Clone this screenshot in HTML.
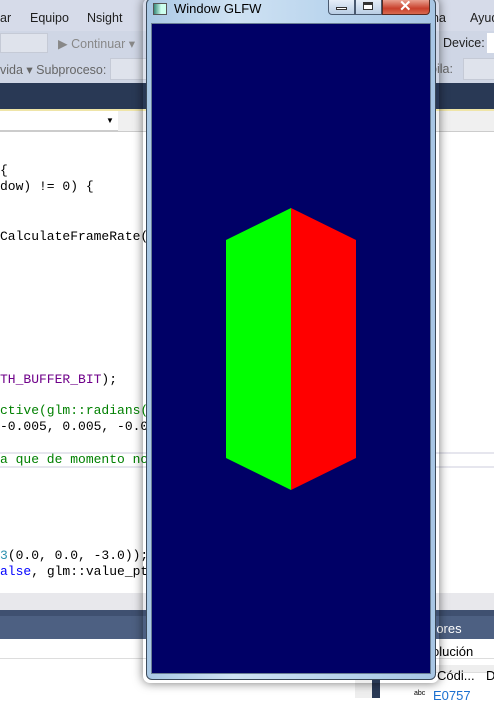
<!DOCTYPE html>
<html><head><style>
*{margin:0;padding:0;box-sizing:border-box}
body{width:494px;height:698px;overflow:hidden;position:relative;background:#fff;font-family:"Liberation Sans",sans-serif}
.a{position:absolute}
.code{font-family:"Liberation Mono",monospace;font-size:13px;white-space:pre;color:#000;left:0}
.menu{font-size:12.5px;color:#1e1e1e}
</style></head><body>
<div class="a" style="left:0;top:0;width:494px;height:31px;background:#d6dbe9"></div>
<div class="a menu" style="left:0;top:11px">ar</div>
<div class="a menu" style="left:30px;top:11px">Equipo</div>
<div class="a menu" style="left:87px;top:11px">Nsight</div>
<div class="a menu" style="left:432px;top:11px">na</div>
<div class="a menu" style="left:470px;top:11px">Ayud</div>
<div class="a" style="left:0;top:31px;width:494px;height:25px;background:#cfd6e5"></div>
<div class="a" style="left:0;top:33px;width:48px;height:20px;background:#dfe3ec;border:1px solid #c5cad6"></div>
<div class="a menu" style="left:58px;top:36px;color:#888">▶ Continuar ▾</div>
<div class="a menu" style="left:443px;top:36px">Device:</div>
<div class="a" style="left:487px;top:33px;width:10px;height:20px;background:#fff"></div>
<div class="a" style="left:0;top:56px;width:494px;height:27px;background:#cfd6e5"></div>
<div class="a menu" style="left:0;top:62px;color:#666">vida ▾ Subproceso:</div>
<div class="a" style="left:110px;top:58px;width:40px;height:22px;background:#dfe3ec;border:1px solid #c5cad6"></div>
<div class="a menu" style="left:430px;top:62px;color:#666">pila:</div>
<div class="a" style="left:463px;top:58px;width:40px;height:22px;background:#dfe3ec;border:1px solid #c5cad6"></div>
<div class="a" style="left:0;top:83px;width:494px;height:26px;background:#293955"></div>
<div class="a" style="left:0;top:109px;width:494px;height:2px;background:#efe5a8"></div>
<div class="a" style="left:0;top:111px;width:118px;height:20px;background:#fff;border-bottom:1px solid #ccc"></div>
<div class="a" style="left:106px;top:116px;font-size:8px">▼</div>
<div class="a" style="left:118px;top:111px;width:376px;height:20px;background:#f0f0f0"></div>
<div class="a" style="left:0;top:131px;width:494px;height:1px;background:#ccc"></div>
<div class="a code" style="top:163px">{</div>
<div class="a code" style="top:179px">dow) != 0) {</div>
<div class="a code" style="top:229px">CalculateFrameRate(<span style="color:#00f">fa</span></div>
<div class="a code" style="top:372px"><span style="color:#6f008a">TH_BUFFER_BIT</span>);</div>
<div class="a code" style="top:403px;color:#008000">ctive(glm::radians(45                       ight, 0.</div>
<div class="a code" style="top:419px">-0.005, 0.005, -0.005</div>
<div class="a" style="left:0;top:452px;width:494px;height:16px;border-top:2px solid #e6e6ee;border-bottom:2px solid #e6e6ee"></div>
<div class="a code" style="top:452px;color:#008000">a que de momento no s</div>
<div class="a code" style="top:548px"><span style="color:#2b91af">3</span>(0.0, 0.0, -3.0));</div>
<div class="a code" style="top:564px"><span style="color:#00f">alse</span>, glm::value_ptr(</div>
<div class="a" style="left:0;top:593px;width:494px;height:17px;background:#e8e8ec"></div>
<div class="a" style="left:0;top:610px;width:494px;height:6px;background:#3f5070"></div>
<div class="a" style="left:0;top:616px;width:494px;height:23px;background:#4d6082"></div>
<div class="a" style="left:432px;top:621px;font-size:13px;color:#fff">rores</div>
<div class="a" style="left:0;top:658px;width:494px;height:1px;background:#ddd"></div>
<div class="a" style="left:432px;top:644px;font-size:13px">olución</div>
<div class="a" style="left:355px;top:665px;width:139px;height:33px;background:#eee"></div>
<div class="a" style="left:380px;top:672px;width:114px;height:26px;background:#fff;border-top:1px solid #ddd"></div>
<div class="a" style="left:372px;top:676px;width:8px;height:22px;background:#293955"></div>
<div class="a" style="left:437px;top:668px;font-size:13px">Códi...</div>
<div class="a" style="left:486px;top:668px;font-size:13px">D</div>
<div class="a" style="left:433px;top:688px;font-size:13px;color:#1a6fd0">E0757</div>
<div class="a" style="left:414px;top:690px;font-size:7px">abc</div>
<!-- window -->
<div class="a" style="left:143px;top:-2px;width:296px;height:685px;border-radius:7px;box-shadow:0 0 10px rgba(0,0,0,.55)"></div>
<div class="a" style="left:146px;top:-2px;width:290px;height:682px;border-radius:6px;background:linear-gradient(90deg,#a9c8e4,#cfe2f3 30%,#bcd6ee 60%,#a7c6e4);border:1px solid #3b4a5a"></div>
<div class="a" style="left:153px;top:3px;width:14px;height:12px;background:linear-gradient(90deg,#3a8a7a,#cfe 60%);border:1px solid #555"></div>
<div class="a" style="left:174px;top:1px;font-size:13px;color:#000">Window GLFW</div>
<div class="a" style="left:328px;top:-1px;width:27px;height:16px;background:linear-gradient(#e6eef8,#b9cde4);border:1px solid #4a5a70;border-radius:0 0 0 4px"></div>
<div class="a" style="left:336px;top:7px;width:11px;height:3px;border:1px solid #333;background:#fff"></div>
<div class="a" style="left:355px;top:-1px;width:27px;height:16px;background:linear-gradient(#e6eef8,#b9cde4);border:1px solid #4a5a70"></div>
<div class="a" style="left:363px;top:2px;width:10px;height:8px;border:1px solid #333;border-top-width:3px;background:#fff"></div>
<div class="a" style="left:382px;top:-1px;width:48px;height:16px;background:linear-gradient(#e9a090,#c8402c 60%,#d86a50);border:1px solid #5a2a20;border-radius:0 0 4px 0"></div>
<div class="a" style="left:399px;top:-3px;font-size:15px;font-weight:bold;color:#fff">✕</div>
<div class="a" style="left:151px;top:23px;width:280px;height:651px;border:1px solid #6a7f95;background:#000066"></div>
<svg class="a" style="left:0;top:0" width="494" height="698">
<polygon points="226,240 291,208 291,490 226,458" fill="#00ff00"/>
<polygon points="291,208 356,240 356,458 291,490" fill="#ff0000"/>
</svg>
</body></html>
